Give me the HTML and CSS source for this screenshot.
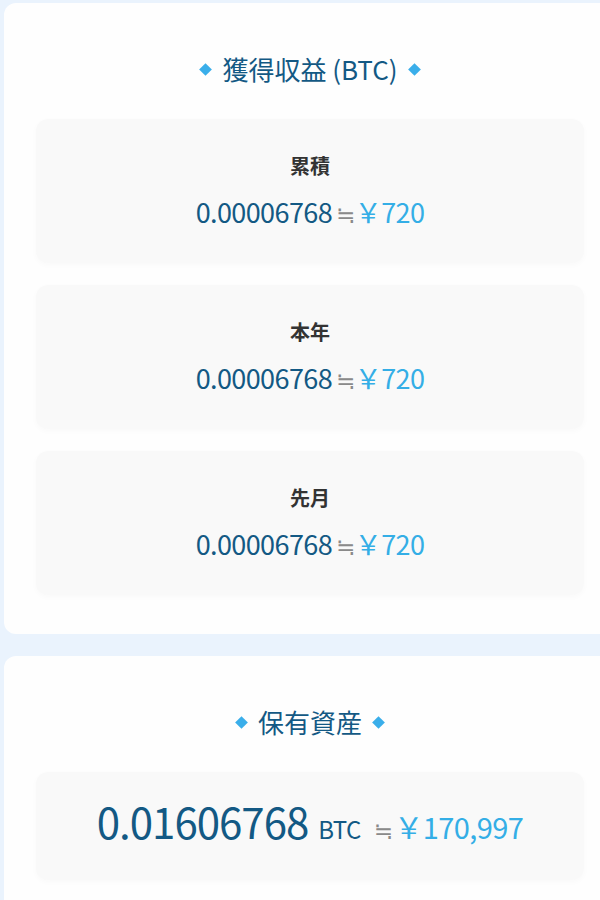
FILE: index.html
```html
<!DOCTYPE html>
<html lang="ja">
<head>
    <meta charset="UTF-8">
    <meta name="viewport" content="width=device-width, initial-scale=1.0">
    <title>獲得収益</title>
    <link rel="stylesheet" href="styles.css">
</head>
<body>

    <div class="page">
        <section class="card">
            <h2 class="card-title"><span class="dot"></span>獲得収益 (BTC)<span class="dot"></span></h2>
            <div class="stat-list">
                <div class="stat">
                    <div class="stat-label">累積</div>
                    <div class="stat-value">
                        <span class="btc">0.00006768</span><span class="approx">≒</span><span class="yen">￥720</span>
                    </div>
                </div>
                <div class="stat">
                    <div class="stat-label">本年</div>
                    <div class="stat-value">
                        <span class="btc">0.00006768</span><span class="approx">≒</span><span class="yen">￥720</span>
                    </div>
                </div>
                <div class="stat">
                    <div class="stat-label">先月</div>
                    <div class="stat-value">
                        <span class="btc">0.00006768</span><span class="approx">≒</span><span class="yen">￥720</span>
                    </div>
                </div>
            </div>
        </section>

        <section class="card">
            <h2 class="card-title"><span class="dot"></span>保有資産<span class="dot"></span></h2>
            <div class="stat stat-total">
                <div class="stat-value">
                    <span class="btc">0.01606768</span><span class="unit">BTC</span><span class="approx">≒</span><span class="yen">￥170,997</span>
                </div>
            </div>
        </section>
    </div>

</body>
</html>
```

FILE: styles.css
```css
* {
    margin: 0;
    padding: 0;
    box-sizing: border-box;
}
html, body {
    overflow: hidden;
}
body {
    background: #eaf3fd;
    font-family: "Noto Sans CJK JP", "Noto Sans", sans-serif;
    color: #333;
}
.page {
    width: 612px;
    margin: 3px 0 0 4px;
    display: flex;
    flex-direction: column;
    gap: 22px;
}
.card {
    background: #fefefe;
    border-radius: 12px;
    padding: 48px 32px 39px;
}
.card-title {
    display: flex;
    justify-content: center;
    align-items: center;
    gap: 12px;
    font-size: 26px;
    line-height: 36px;
    font-weight: normal;
    color: #135984;
    margin-bottom: 32px;
}
.dot {
    width: 9px;
    height: 9px;
    background: #3aaeea;
    transform: rotate(45deg);
}
.stat-list {
    display: flex;
    flex-direction: column;
    gap: 22px;
}
.stat {
    height: 144px;
    background: #f9f9f9;
    border-radius: 12px;
    box-shadow: 0 2px 6px rgba(0, 0, 0, 0.025);
    display: flex;
    flex-direction: column;
    justify-content: center;
    align-items: center;
    gap: 13px;
}
.stat-label {
    font-size: 20px;
    line-height: 32px;
    font-weight: bold;
    color: #333;
}
.stat-value {
    display: flex;
    align-items: baseline;
    font-size: 27px;
    line-height: 34px;
    letter-spacing: -0.6px;
}
.btc {
    color: #135984;
}
.approx {
    color: #8a8a8a;
    font-family: "DejaVu Sans", sans-serif;
    font-size: 23px;
    margin: 0 0 0 4px;
}
.yen {
    color: #34aee6;
}
.stat-total {
    height: 108px;
}
.stat-total .btc {
    font-size: 42px;
    letter-spacing: -1px;
}
.stat-total .unit {
    color: #135984;
    font-size: 24px;
    margin-left: 10px;
}
.stat-total .approx {
    margin: 0 2px 0 13px;
}
.stat-total .yen {
    font-size: 29px;
    letter-spacing: -0.6px;
}
```
